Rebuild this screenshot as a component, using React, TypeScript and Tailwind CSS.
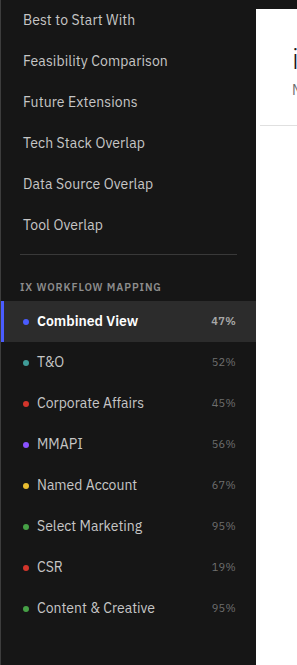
import React from "react";

const navItems = [
  "Best to Start With",
  "Feasibility Comparison",
  "Future Extensions",
  "Tech Stack Overlap",
  "Data Source Overlap",
  "Tool Overlap",
];

const workflows = [
  { name: "Combined View", pct: "47%", dot: "bg-[#4a5cff]", active: true },
  { name: "T&O", pct: "52%", dot: "bg-[#3f9c98]" },
  { name: "Corporate Affairs", pct: "45%", dot: "bg-[#d2352b]" },
  { name: "MMAPI", pct: "56%", dot: "bg-[#8a52ff]" },
  { name: "Named Account", pct: "67%", dot: "bg-[#e9bd30]" },
  { name: "Select Marketing", pct: "95%", dot: "bg-[#46a046]" },
  { name: "CSR", pct: "19%", dot: "bg-[#d2352b]" },
  { name: "Content & Creative", pct: "95%", dot: "bg-[#46a046]" },
];

export default function App() {
  return (
    <div
      className="flex h-[665px] w-[297px] overflow-hidden bg-[#161616]"
      style={{ fontFamily: '"IBM Plex Sans", Inter, "Noto Sans", sans-serif' }}
    >
      <aside className="flex w-[256px] shrink-0 flex-col border-l border-[#3d3d3d] bg-[#161616]">
        <nav className="flex flex-col">
          {navItems.map((n) => (
            <div
              key={n}
              className="flex h-[41px] items-center pl-[22px] text-[14px] tracking-[0.1px] text-[#c6c6c6]"
            >
              {n}
            </div>
          ))}
        </nav>
        <div className="mx-[19px] mt-[8px] h-px bg-[#393939]" />
        <div className="pl-[19px] pt-[25px] pb-[7px] text-[10.5px] font-semibold leading-[14px] tracking-[0.9px] text-[#8d8d8d]">
          IX WORKFLOW MAPPING
        </div>
        <div className="flex flex-col">
          {workflows.map((w) => (
            <div
              key={w.name}
              className={`flex h-[41px] items-center border-l-[3px] pl-[19px] pr-[20px] ${
                w.active ? "border-[#4a5cff] bg-[#2c2c2c]" : "border-transparent"
              }`}
            >
              <span className={`h-[6px] w-[6px] rounded-full ${w.dot}`} />
              <span
                className={`ml-[8px] flex-1 text-[14px] ${
                  w.active ? "font-semibold text-white" : "text-[#c6c6c6]"
                }`}
              >
                {w.name}
              </span>
              <span
                className={`text-[11px] tracking-[0.3px] ${
                  w.active ? "font-semibold text-[#a8a8a8]" : "text-[#6f6f6f]"
                }`}
              >
                {w.pct}
              </span>
            </div>
          ))}
        </div>
      </aside>
      <main className="min-w-0 flex-1 pt-[9px]">
        <div className="h-full overflow-hidden bg-white">
          <div className="pl-[36px] pt-[32px] whitespace-nowrap">
            <h1 className="text-[28px] font-light leading-[36px] text-[#161616]">
              ix Workflow Mapping
            </h1>
            <p className="mt-[4px] text-[14px] leading-[18px] text-[#6f6f6f]">
              Mapping of workflows across teams
            </p>
          </div>
          <div className="ml-[4px] mt-[26px] h-px w-[400px] bg-[#e0e0e0]" />
        </div>
      </main>
    </div>
  );
}
